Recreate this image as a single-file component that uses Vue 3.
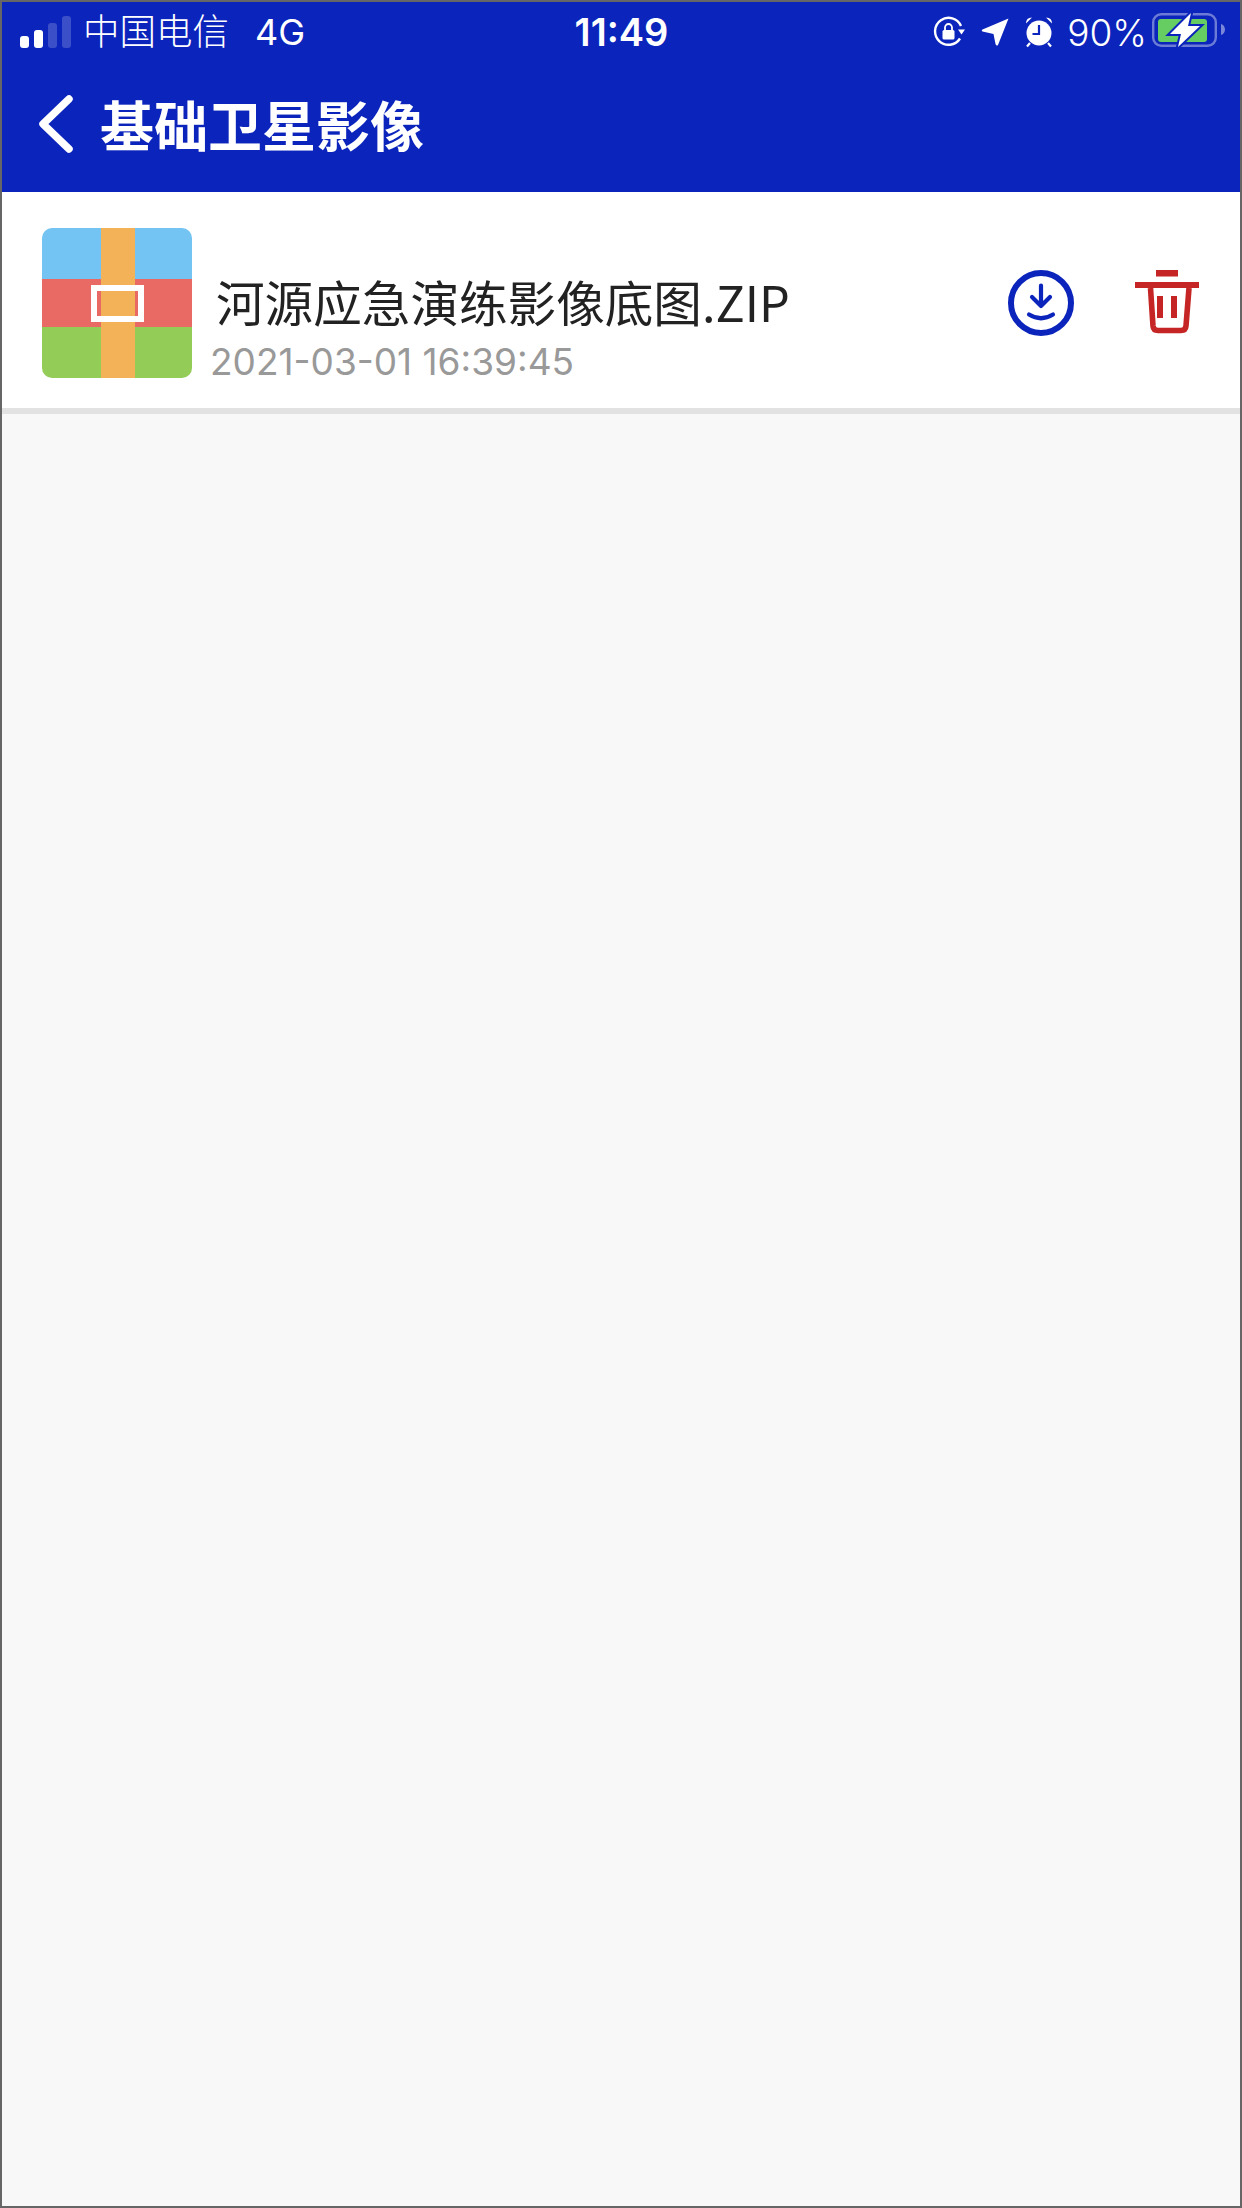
<script setup>
const title = '基础卫星影像'
const file = { name: '河源应急演练影像底图.ZIP', time: '2021-03-01 16:39:45' }
</script>

<template>
  <div class="phone">
    <header class="top">
      <div class="status">
        <div class="status-left">
          <svg class="signal" width="52" height="32" viewBox="0 0 52 32">
            <rect x="0" y="20" width="9" height="12" rx="3" fill="#fff" />
            <rect x="14" y="14" width="9" height="18" rx="3" fill="#fff" />
            <rect x="28" y="7" width="9" height="25" rx="3" fill="#fff" fill-opacity=".2" />
            <rect x="42" y="0" width="9" height="32" rx="3" fill="#fff" fill-opacity=".2" />
          </svg>
          <span class="carrier">中国电信</span>
          <span class="net">4G</span>
        </div>
        <div class="clock">11:49</div>
        <div class="status-right">
          <svg width="32" height="32" viewBox="0 0 32 32" fill="none">
            <path d="M27 22.5A13.5 13.5 0 1 1 28 10" stroke="#fff" stroke-width="2.4" />
            <path d="M25 13.5h7l-3.5 5z" fill="#fff" />
            <rect x="9.5" y="14" width="12" height="9.5" rx="1.5" fill="#fff" />
            <path d="M12 14v-2.5a3.5 3.5 0 0 1 7 0V14" stroke="#fff" stroke-width="1.8" />
          </svg>
          <svg class="loc" width="28" height="28" viewBox="0 0 28 28">
            <path d="M27.5 0.5 L17 27 Q15.5 28.5 14.5 26 L12.5 16 L1.5 13.5 Q0 12.5 1.5 11.5Z" fill="#fff" />
          </svg>
          <svg class="alarm" width="28" height="32" viewBox="0 0 28 32" fill="none">
            <circle cx="14" cy="17" r="12.5" fill="#fff" />
            <path d="M14 9v9H7.5" stroke="#0b24bb" stroke-width="2.2" />
            <path d="M1 7.5Q1 1.5 7 1.5ZM27 7.5Q27 1.5 21 1.5Z" fill="#fff" />
            <path d="M5 27l-3 3.5M23 27l3 3.5" stroke="#fff" stroke-width="2.2" />
          </svg>
          <span class="pct">90%</span>
          <svg class="battery" width="74" height="34" viewBox="0 0 74 34" fill="none">
            <rect x="1.2" y="1.2" width="62.6" height="31.6" rx="8" stroke="#fff" stroke-opacity=".4" stroke-width="2.4" />
            <rect x="6" y="6" width="49" height="23" rx="3" fill="#66cd63" />
            <path d="M69 11c2.5.8 4 3 4 5.5s-1.500 4.700-4 5.500z" fill="#fff" fill-opacity=".45" />
            <path d="M39 0 L18 21 H29 L26 34 L48 13 H36Z" fill="#fff" stroke="#0b24bb" stroke-width="4" paint-order="stroke" />
          </svg>
        </div>
      </div>
      <div class="nav">
        <svg class="back" width="36" height="58" viewBox="0 0 36 58" fill="none">
          <path d="M31 4 L5 29 L31 54" stroke="#fff" stroke-width="7.5" stroke-linecap="round" stroke-linejoin="round" />
        </svg>
        <h1 class="title">{{ title }}</h1>
      </div>
    </header>

    <main class="content">
      <section class="row">
        <div class="archive">
          <div class="band band-blue"></div>
          <div class="band band-red"></div>
          <div class="band band-green"></div>
          <div class="strap"></div>
          <div class="buckle"></div>
        </div>
        <div class="info">
          <div class="name">{{ file.name }}</div>
          <div class="time">{{ file.time }}</div>
        </div>
        <div class="actions">
          <svg width="66" height="66" viewBox="0 0 66 66" fill="none" stroke="#0b24bb" stroke-linecap="round" stroke-linejoin="round">
            <circle cx="33" cy="33" r="30" stroke-width="6" />
            <path d="M33 15.500V36M24 27l9 9 9-9" stroke-width="4.200" />
            <path d="M21 44.500Q33 52 45 44.500" stroke-width="4.200" />
          </svg>
          <svg width="64" height="66" viewBox="0 0 64 66" fill="#c62525">
            <rect x="21" y="0" width="22" height="6.500" />
            <rect x="0" y="12" width="64" height="6" />
            <rect x="22" y="26" width="6" height="22" />
            <rect x="36" y="26" width="6" height="22" />
            <path d="M15.500 18L18 56Q18.400 60.500 23 60.500H46Q50.600 60.500 51 56L54 18" fill="none" stroke="#c62525" stroke-width="5.600" />
          </svg>
        </div>
      </section>
    </main>
  </div>
</template>

<style scoped>
.phone {
  box-sizing: border-box;
  width: 1242px;
  height: 2208px;
  border: 2px solid #666;
  background: #f8f8f8;
  display: flex;
  flex-direction: column;
  font-family: Inter, "Noto Sans CJK SC", sans-serif;
  overflow: hidden;
}
.top {
  height: 190px;
  flex: none;
  background: #0b24bb;
  color: #fff;
}
.status {
  height: 60px;
  display: grid;
  grid-template-columns: 1fr auto 1fr;
  align-items: center;
  padding: 0 14px 0 18px;
}
.status-left {
  display: flex;
  align-items: center;
}
.signal {
  margin-right: 11px;
}
.carrier {
  font-size: 36.500px;
  font-weight: 300;
  line-height: 44px;
}
.net {
  font-size: 36px;
  font-weight: 400;
  margin-left: 26px;
}
.clock {
  font-size: 38px;
  font-weight: 600;
  margin-left: -3px;
}
.status-right {
  display: flex;
  align-items: center;
  justify-content: flex-end;
}
.loc {
  margin-left: 16px;
}
.alarm {
  margin-left: 16px;
}
.pct {
  font-size: 37px;
  font-weight: 300;
  margin-left: 14px;
}
.battery {
  margin-left: 5px;
  margin-bottom: 4px;
}
.nav {
  height: 124px;
  display: flex;
  align-items: center;
  padding-left: 36px;
}
.title {
  margin: 0 0 0 26px;
  font-size: 54px;
  font-weight: 700;
  line-height: 1;
  font-family: "Noto Sans CJK SC", sans-serif;
}
.content {
  flex: 1;
}
.row {
  box-sizing: border-box;
  height: 222px;
  background: #fff;
  border-bottom: 6px solid #e2e2e2;
  display: flex;
  align-items: flex-start;
  padding: 36px 41px 0 40px;
}
.archive {
  position: relative;
  width: 150px;
  height: 150px;
  border-radius: 10px;
  overflow: hidden;
  display: flex;
  flex-direction: column;
  flex: none;
}
.band-blue {
  height: 51px;
  background: #73c3f3;
}
.band-red {
  height: 48px;
  background: #e96a64;
}
.band-green {
  height: 51px;
  background: #93cd57;
}
.strap {
  position: absolute;
  left: 59px;
  top: 0;
  width: 34px;
  height: 100%;
  background: #f3b257;
}
.buckle {
  position: absolute;
  box-sizing: border-box;
  left: 49px;
  top: 57px;
  width: 53px;
  height: 37px;
  border: 6px solid #fff;
}
.info {
  margin-left: 18px;
  padding-top: 43px;
  flex: 1;
}
.name {
  font-size: 48.600px;
  line-height: 60px;
  color: #222;
  padding-left: 6px;
  font-family: "Noto Sans CJK SC", Inter, sans-serif;
  font-weight: 400;
}
.time {
  font-size: 37px;
  line-height: 44px;
  margin-top: 9px;
  color: #999;
  font-weight: 400;
}
.actions {
  display: flex;
  align-items: center;
  gap: 61px;
  padding-top: 42px;
}
</style>

<style>
html, body {
  margin: 0;
  background: #f8f8f8;
}
</style>
